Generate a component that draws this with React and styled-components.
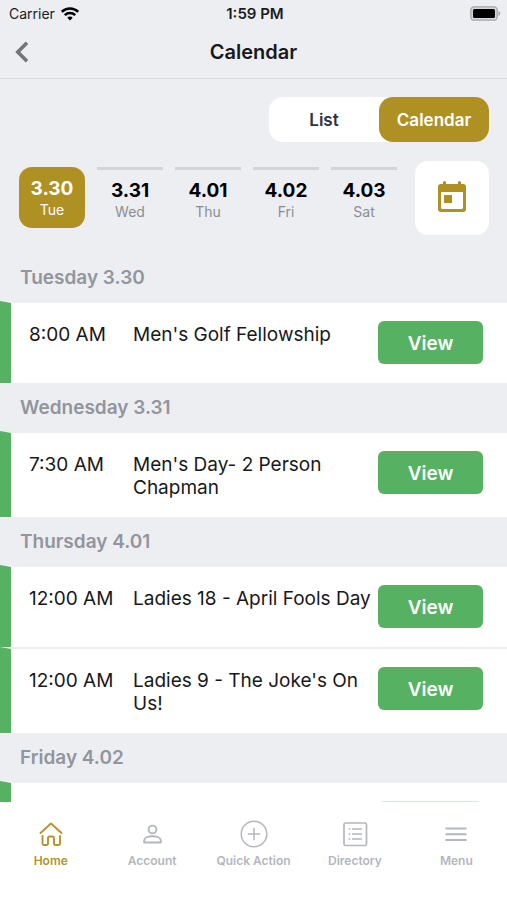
import React, { useState } from 'react';
import styled, { createGlobalStyle } from 'styled-components';

const GlobalStyle = createGlobalStyle`
  * {
    box-sizing: border-box;
  }

  body {
    margin: 0;
    background: #edeef2;
    color: #17181a;
    font-family: Inter, 'Liberation Sans', sans-serif;
  }

  button {
    border: none;
    padding: 0;
    background: none;
    font-family: inherit;
    cursor: pointer;
  }
`;

const Screen = styled.div`
  display: flex;
  flex-direction: column;
  height: 100vh;
`;

const StatusBar = styled.div`
  display: grid;
  grid-template-columns: 1fr auto 1fr;
  align-items: center;
  height: 27px;
  padding: 0 6px 0 9px;
  font-size: 14px;
  color: #1b1c1e;
`;

const Carrier = styled.span`
  display: flex;
  align-items: center;
  gap: 6px;
`;

const Clock = styled.span`
  font-size: 15px;
  font-weight: 600;
`;

const Battery = styled.span`
  display: flex;
  justify-content: flex-end;
`;

const NavBar = styled.header`
  display: grid;
  grid-template-columns: 1fr auto 1fr;
  align-items: center;
  height: 52px;
  padding: 0 15px 2px;
  border-bottom: 1px solid #d9dadd;
`;

const BackButton = styled.button`
  display: flex;
  justify-self: start;
`;

const Title = styled.h1`
  margin: 0;
  font-size: 20px;
  font-weight: 600;
`;

const Toolbar = styled.div`
  display: flex;
  justify-content: flex-end;
  padding: 18px 18px 0;
`;

const Segment = styled.div`
  display: flex;
  border-radius: 14px;
  background: #fff;
`;

const SegmentButton = styled.button`
  width: 110px;
  height: 45px;
  border-radius: 14px;
  background: ${props => (props.$active ? '#af9023' : 'transparent')};
  color: ${props => (props.$active ? '#fff' : '#2d3142')};
  font-size: 17px;
  font-weight: 600;
`;

const DateRow = styled.div`
  display: flex;
  align-items: flex-start;
  justify-content: space-between;
  padding: 19px 18px 0 19px;
`;

const Days = styled.div`
  display: flex;
  gap: 12px;
  padding-top: 6px;
`;

const Day = styled.button`
  display: flex;
  flex-direction: column;
  align-items: center;
  width: 66px;
  height: 61px;
  padding-top: ${props => (props.$active ? '11px' : '10px')};
  border-top: ${props => (props.$active ? 'none' : '3px solid #d2d4d8')};
  border-radius: ${props => (props.$active ? '13px' : '0')};
  background: ${props => (props.$active ? '#af9023' : 'transparent')};
  color: ${props => (props.$active ? '#fff' : '#000')};
`;

const DayDate = styled.span`
  font-size: 19px;
  font-weight: 700;
  line-height: 22px;
`;

const DayName = styled.span`
  color: ${props => (props.$active ? '#fff' : '#8b8d93')};
  font-size: 14px;
  line-height: 20px;
`;

const PickerButton = styled.button`
  display: flex;
  align-items: center;
  justify-content: center;
  width: 74px;
  height: 74px;
  border-radius: 13px;
  background: #fff;
`;

const Agenda = styled.main`
  flex: 1;
  min-height: 0;
  padding-top: 18px;
  overflow-y: auto;
  scrollbar-width: none;
`;

const DayHeading = styled.h2`
  margin: 0;
  padding: 0 20px;
  background: #edeef2;
  color: #92959c;
  font-size: 19px;
  font-weight: 600;
  line-height: 50px;
`;

const EventRow = styled.article`
  display: flex;
  align-items: flex-start;
  padding-right: 24px;
  background: #fff;

  & + & {
    margin-top: 2px;
  }
`;

const Stripe = styled.span`
  align-self: stretch;
  flex: none;
  width: 11px;
  margin-top: -2px;
  background: #56b262;
  clip-path: polygon(0 0, 100% 2px, 100% 100%, 0 100%);
`;

const EventTime = styled.span`
  flex: none;
  width: 122px;
  padding: 20px 0 18px 18px;
  font-size: 19px;
  line-height: 23px;
`;

const EventName = styled.span`
  flex: 1;
  padding: 20px 0 18px;
  font-size: 19px;
  line-height: 23px;
`;

const ViewButton = styled.button`
  flex: none;
  width: 105px;
  height: 43px;
  margin: 18px 0 19px;
  padding-top: 2px;
  border-radius: 6px;
  background: #56b262;
  color: #fff;
  font-size: 19px;
  font-weight: 600;
`;

const ButtonPlaceholder = styled.span`
  flex: none;
  width: 105px;
  height: 43px;
  margin: 18px 0 19px auto;
  border-radius: 6px;
  background: #d5eddc;
`;

const TabBar = styled.nav`
  display: flex;
  height: 98px;
  padding-top: 18px;
  background: #fff;
`;

const Tab = styled.a`
  display: flex;
  flex: 1;
  flex-direction: column;
  align-items: center;
  gap: 3px;
  color: ${props => (props.$active ? '#b4932a' : '#b4b7bc')};
  font-size: 12px;
  font-weight: 600;
  line-height: 20px;
  text-decoration: none;
  white-space: nowrap;
`;

const WifiIcon = () => (
  <svg width="18" height="14" viewBox="0 0 18 14" fill="none" stroke="#000" strokeWidth="2.5">
    <path d="M.8 4.800a11.800 11.800 0 0 1 16.400 0" />
    <path d="M3.800 8.200a7.500 7.500 0 0 1 10.400 0" />
    <path d="M9 13.600 6.300 10.800a3.900 3.900 0 0 1 5.400 0z" fill="#000" stroke="none" />
  </svg>
);

const BatteryIcon = () => (
  <svg width="31" height="15" viewBox="0 0 31 15">
    <rect x="0.800" y="0.800" width="26.400" height="13.400" rx="3.500" fill="#d8d9dc" stroke="#a5a6a9" strokeWidth="1.300" />
    <rect x="3" y="3" width="22" height="9" rx="1.500" fill="#000" />
    <path d="M28.500 5c2.300.8 2.300 4.200 0 5z" fill="#a5a6a9" />
  </svg>
);

const BackIcon = () => (
  <svg width="14" height="22" viewBox="0 0 14 22" fill="none" stroke="#747578" strokeWidth="3.600">
    <path d="M12 1.800 2.800 11l9.200 9.200" />
  </svg>
);

const PickerIcon = () => (
  <svg width="30" height="34" viewBox="0 0 30 34" fill="#af9023">
    <path
      fillRule="evenodd"
      d="M6 1.500a1.500 1.500 0 0 1 3 0V3h12V1.500a1.500 1.500 0 0 1 3 0V3h2a3 3 0 0 1 3 3v22a3 3 0 0 1-3 3H4a3 3 0 0 1-3-3V6a3 3 0 0 1 3-3h2zM4 11v15.500a1.500 1.500 0 0 0 1.500 1.500h19a1.500 1.500 0 0 0 1.500-1.500V11z"
    />
    <path d="M7 14h8v8H7z" />
  </svg>
);

const HomeIcon = () => (
  <svg width="28" height="28" viewBox="0 0 28 28" fill="none" stroke="currentColor" strokeWidth="1.900" strokeLinecap="round" strokeLinejoin="round">
    <path d="M3.500 13 14 3.500 24.500 13" />
    <path d="M5.500 16v7.500a1.500 1.500 0 0 0 1.500 1.500h2.500a1.500 1.500 0 0 0 1.500-1.500v-5.500a1.500 1.500 0 0 1 1.500-1.500h3a1.500 1.500 0 0 1 1.500 1.500v5.500a1.500 1.500 0 0 0 1.500 1.500h3a1.500 1.500 0 0 0 1.500-1.500V16" />
  </svg>
);

const AccountIcon = () => (
  <svg width="28" height="28" viewBox="0 0 28 28" fill="none" stroke="currentColor" strokeWidth="1.900" strokeLinejoin="round">
    <circle cx="14.500" cy="9.500" r="3.900" />
    <path d="M6.200 22.500v-2c0-2.700 4-4.200 8.300-4.200s8.300 1.500 8.300 4.200v2z" />
  </svg>
);

const QuickActionIcon = () => (
  <svg width="28" height="28" viewBox="0 0 28 28" fill="none" stroke="currentColor" strokeWidth="1.500">
    <circle cx="14" cy="14" r="12.800" />
    <path d="M14 7.800v12.400M7.800 14h12.400" />
  </svg>
);

const DirectoryIcon = () => (
  <svg width="28" height="28" viewBox="0 0 28 28" fill="none" stroke="currentColor" strokeWidth="1.700">
    <rect x="3" y="3" width="22.500" height="22.500" rx="1.500" />
    <path d="M11 9h10M11 14h10M11 19h10M7.500 9h1.800M7.500 14h1.800M7.500 19h1.800" />
  </svg>
);

const MenuIcon = () => (
  <svg width="28" height="28" viewBox="0 0 28 28" fill="none" stroke="currentColor" strokeWidth="2">
    <path d="M3.500 8.500h21M3.500 14.200h21M3.500 19.900h21" />
  </svg>
);

const days = [
  { date: '3.30', name: 'Tue' },
  { date: '3.31', name: 'Wed' },
  { date: '4.01', name: 'Thu' },
  { date: '4.02', name: 'Fri' },
  { date: '4.03', name: 'Sat' },
];

const agenda = [
  { day: 'Tuesday 3.30', events: [{ time: '8:00 AM', name: "Men's Golf Fellowship" }] },
  { day: 'Wednesday 3.31', events: [{ time: '7:30 AM', name: "Men's Day- 2 Person Chapman" }] },
  {
    day: 'Thursday 4.01',
    events: [
      { time: '12:00 AM', name: 'Ladies 18 - April Fools Day' },
      { time: '12:00 AM', name: "Ladies 9 - The Joke's On Us!" },
    ],
  },
  { day: 'Friday 4.02', events: [] },
];

const tabs = [
  { label: 'Home', icon: HomeIcon },
  { label: 'Account', icon: AccountIcon },
  { label: 'Quick Action', icon: QuickActionIcon },
  { label: 'Directory', icon: DirectoryIcon },
  { label: 'Menu', icon: MenuIcon },
];

const App = () => {
  const [view, setView] = useState('Calendar');
  const [selectedDay, setSelectedDay] = useState('3.30');

  return (
    <>
      <GlobalStyle />
      <Screen>
        <StatusBar>
          <Carrier>
            Carrier
            <WifiIcon />
          </Carrier>
          <Clock>1:59 PM</Clock>
          <Battery>
            <BatteryIcon />
          </Battery>
        </StatusBar>
        <NavBar>
          <BackButton aria-label="Back">
            <BackIcon />
          </BackButton>
          <Title>Calendar</Title>
        </NavBar>
        <Toolbar>
          <Segment>
            {['List', 'Calendar'].map(name => (
              <SegmentButton key={name} $active={view === name} onClick={() => setView(name)}>
                {name}
              </SegmentButton>
            ))}
          </Segment>
        </Toolbar>
        <DateRow>
          <Days>
            {days.map(({ date, name }) => (
              <Day key={date} $active={selectedDay === date} onClick={() => setSelectedDay(date)}>
                <DayDate>{date}</DayDate>
                <DayName $active={selectedDay === date}>{name}</DayName>
              </Day>
            ))}
          </Days>
          <PickerButton aria-label="Pick a date">
            <PickerIcon />
          </PickerButton>
        </DateRow>
        <Agenda>
          {agenda.map(({ day, events }) => (
            <section key={day}>
              <DayHeading>{day}</DayHeading>
              {events.map((event, index) => (
                <EventRow key={index}>
                  <Stripe />
                  <EventTime>{event.time}</EventTime>
                  <EventName>{event.name}</EventName>
                  <ViewButton>View</ViewButton>
                </EventRow>
              ))}
              {events.length === 0 && (
                <EventRow>
                  <Stripe />
                  <ButtonPlaceholder />
                </EventRow>
              )}
            </section>
          ))}
        </Agenda>
        <TabBar>
          {tabs.map(({ label, icon: Icon }) => (
            <Tab key={label} href="#" $active={label === 'Home'}>
              <Icon />
              {label}
            </Tab>
          ))}
        </TabBar>
      </Screen>
    </>
  );
};

export default App;
